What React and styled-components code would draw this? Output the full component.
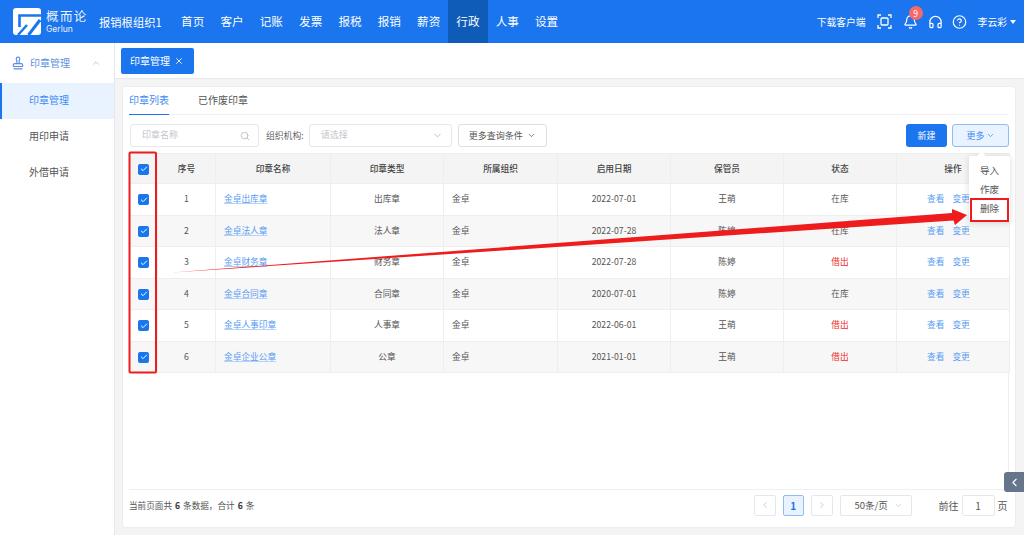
import React from 'react';
import styled, { createGlobalStyle } from 'styled-components';
import { ChevronUp, ChevronDown, ChevronLeft, ChevronRight, Search, X, Check, Bell, Headphones, CircleHelp, Stamp } from 'lucide-react';

const 파랑 = '#1a75ee';

const Global = createGlobalStyle`
  html, body { margin: 0; padding: 0; background: #fff; }
  body { font-family: "Noto Sans CJK SC", "Noto Sans", sans-serif; color: #555; overflow: hidden; }
  * { box-sizing: border-box; }
`;

const Page = styled.div`
  position: relative;
  width: 1024px;
  height: 535px;
  display: flex;
  flex-direction: column;
  overflow: hidden;
`;

const Header = styled.header`
  height: 43px;
  flex: none;
  background: ${파랑};
  display: flex;
  align-items: center;
  color: #fff;
  padding-left: 13px;
`;

const Logo = styled.div`
  display: flex;
  align-items: center;
  gap: 5px;
  width: 86px;
`;

const LogoText = styled.div`
  display: flex;
  flex-direction: column;
  line-height: 1;
  opacity: .92;
  b { font-size: 12.5px; font-weight: 400; letter-spacing: 1.4px; }
  span { font-family: "Inter", sans-serif; font-size: 8.5px; margin-top: 3px; }
`;

const OrgName = styled.div`
  font-size: 11.3px;
  width: 74px;
  white-space: nowrap;
`;

const NavItem = styled.div`
  width: 39.33px;
  height: 43px;
  display: flex;
  align-items: center;
  justify-content: center;
  font-size: 11.6px;
  padding-bottom: 1px;
  background: ${p => p.$active ? '#0f5cb8' : 'transparent'};
`;

const HeaderRight = styled.div`
  margin-left: auto;
  display: flex;
  align-items: center;
  font-size: 9.8px;
  padding-right: 8px;
`;

const Download = styled.span`
  margin-right: 11px;
`;

const IconSlot = styled.div`
  position: relative;
  width: 15px;
  height: 16px;
  margin-right: ${p => p.$gap || 10}px;
  display: flex;
  align-items: center;
  justify-content: center;
`;

const Badge = styled.span`
  position: absolute;
  top: -8px;
  left: 6px;
  width: 14px;
  height: 14px;
  border-radius: 50%;
  background: #f46a6a;
  font-size: 8.5px;
  line-height: 14px;
  text-align: center;
`;

const UserName = styled.span`
  margin-left: 1px;
`;

const Caret = styled.i`
  width: 0;
  height: 0;
  margin-left: 3px;
  border-left: 3.5px solid transparent;
  border-right: 3.5px solid transparent;
  border-top: 4px solid #fff;
`;

const Body = styled.div`
  flex: 1;
  display: flex;
  min-height: 0;
`;

const Sidebar = styled.aside`
  width: 115px;
  flex: none;
  background: #fff;
  border-right: 1px solid #e6e8eb;
  font-size: 10px;
`;

const SideGroup = styled.div`
  height: 40px;
  display: flex;
  align-items: center;
  padding: 0 0 1px 11px;
  color: #5b8fe0;
  svg:first-child { margin-right: 5px; }
  svg:last-child { margin-left: 21px; color: #b5b9c0; }
`;

const SideItem = styled.div`
  height: 36px;
  display: flex;
  align-items: center;
  padding: 0 0 3px 29px;
  color: ${p => p.$active ? '#3f8cf0' : '#555'};
  background: ${p => p.$active ? '#e8f3ff' : 'transparent'};
  box-shadow: ${p => p.$active ? `inset 2px 0 0 ${파랑}` : 'none'};
`;

const Main = styled.main`
  flex: 1;
  min-width: 0;
  display: flex;
  flex-direction: column;
  background: #f4f4f5;
`;

const TabBar = styled.div`
  height: 36px;
  flex: none;
  background: #fff;
  border-bottom: 1px solid #e6e8eb;
  padding: 5px 0 0 6px;
`;

const OpenTab = styled.div`
  width: 73px;
  height: 26px;
  background: ${파랑};
  border-radius: 2px;
  color: #fff;
  font-size: 10px;
  display: flex;
  align-items: center;
  gap: 4px;
  padding: 0 0 2px 9px;
  svg { margin-top: 2px; }
`;

const Card = styled.section`
  flex: 1;
  margin: 7px 8px 7px 7px;
  background: #fff;
  border: 1px solid #ebedf0;
  border-radius: 3px;
  padding: 0 6px;
  display: flex;
  flex-direction: column;
  min-height: 0;
`;

const Tabs = styled.div`
  height: 28px;
  flex: none;
  display: flex;
  gap: 29px;
  border-bottom: 1px solid #eef0f3;
  font-size: 10px;
`;

const Tab = styled.div`
  height: 28px;
  line-height: 25px;
  color: ${p => p.$active ? '#3f8cf0' : '#555'};
  border-bottom: ${p => p.$active ? `1px solid ${파랑}` : 'none'};
`;

const Filters = styled.div`
  height: 23px;
  flex: none;
  margin: 9px 0 6px;
  display: flex;
  align-items: center;
  font-size: 9px;
`;

const Field = styled.div`
  width: ${p => p.$w}px;
  height: 23px;
  margin-left: ${p => p.$ml || 0}px;
  border: 1px solid #e4e7ed;
  border-radius: 3px;
  display: flex;
  align-items: center;
  justify-content: space-between;
  padding: 0 8px 2px 11px;
  color: #c3c6cc;
  svg { color: #b5b9c0; margin-top: 2px; }
`;

const FieldLabel = styled.span`
  margin-left: 7px;
  margin-right: 5px;
  padding-bottom: 1px;
  color: #666;
  font-size: 8.8px;
`;

const PlainButton = styled.div`
  width: 89px;
  height: 23px;
  margin-left: 6px;
  border: 1px solid #dcdfe6;
  border-radius: 3px;
  display: flex;
  align-items: center;
  justify-content: center;
  gap: 4px;
  padding-bottom: 1px;
  color: #555;
`;

const ButtonRow = styled.div`
  margin-left: auto;
  display: flex;
  gap: 5px;
`;

const Primary = styled.div`
  width: 41px;
  height: 23px;
  border-radius: 3px;
  background: ${파랑};
  color: #fff;
  display: flex;
  align-items: center;
  justify-content: center;
  padding-bottom: 1px;
`;

const Outline = styled.div`
  width: 57px;
  height: 23px;
  border-radius: 3px;
  background: #e8f3ff;
  border: 1px solid #8fbdf6;
  color: #3f8cf0;
  display: flex;
  align-items: center;
  justify-content: center;
  gap: 1px;
  padding-bottom: 1px;
`;

const TableBox = styled.div`
  flex: 1;
  min-height: 0;
  border-bottom: 1px solid #eef0f3;
  border-right: 1px solid #eef0f3;
`;

const Table = styled.table`
  width: 880px;
  table-layout: fixed;
  border-collapse: collapse;
  font-size: 8.7px;
  color: #555;
`;

const Th = styled.th`
  height: 30px;
  background: #f4f4f5;
  border: 1px solid #eceef1;
  color: #444;
  font-weight: 500;
  text-align: center;
  padding: 0 0 1px;
`;

const Row = styled.tr`
  background: ${p => p.$even ? '#f7f7f8' : '#fff'};
`;

const Td = styled.td`
  height: 31.5px;
  border: 1px solid #eceef1;
  padding: ${p => p.$left ? '0 0 1px 8px' : '0 0 1px'};
  text-align: ${p => p.$left ? 'left' : 'center'};
  color: ${p => p.$red ? '#ee2a2a' : '#555'};
`;

const NameLink = styled.a`
  color: #5a9bf0;
  text-decoration: underline;
  text-decoration-color: #b4d2f7;
`;

const Action = styled.a`
  color: #5a9bf0;
  margin-right: 8px;
`;

const ActionCell = styled(Td)`
  padding-left: 30px;
  text-align: left;
`;

const CheckBox = styled.span`
  display: inline-flex;
  width: 11px;
  height: 11px;
  border-radius: 2px;
  background: ${파랑};
  color: #fff;
  align-items: center;
  justify-content: center;
  vertical-align: middle;
`;

const Footer = styled.div`
  height: 37px;
  flex: none;
  display: flex;
  align-items: center;
  padding-bottom: 7px;
  font-size: 8.6px;
  color: #555;
  b { color: #333; margin: 0 3px; }
`;

const Pager = styled.div`
  margin-left: auto;
  display: flex;
  align-items: center;
  gap: 7px;
  font-size: 10px;
`;

const PageBtn = styled.div`
  width: 21.5px;
  height: 21px;
  border: 1px solid ${p => p.$active ? '#8fbdf6' : '#e4e7ed'};
  background: ${p => p.$active ? '#e8f3ff' : '#fff'};
  color: ${p => p.$active ? 파랑 : '#c0c4cc'};
  border-radius: 2px;
  font-weight: 700;
  display: flex;
  align-items: center;
  justify-content: center;
`;

const SizeSelect = styled.div`
  width: 72px;
  height: 21px;
  border: 1px solid #e4e7ed;
  border-radius: 2px;
  display: flex;
  align-items: center;
  justify-content: space-between;
  padding: 0 8px 1px 14px;
  font-size: 9.5px;
  svg { color: #c0c4cc; margin-top: 1px; }
`;

const Jump = styled.div`
  margin-left: 20px;
  margin-right: 1.5px;
  display: flex;
  align-items: center;
  gap: 3px;
`;

const JumpInput = styled.div`
  width: 33px;
  height: 21px;
  border: 1px solid #e4e7ed;
  border-radius: 2px;
  display: flex;
  align-items: center;
  justify-content: center;
`;

// 화면 위에 떠 있는 것들
const Popup = styled.div`
  position: absolute;
  left: 969px;
  top: 156px;
  width: 41px;
  height: 66px;
  background: #fff;
  border-radius: 2px;
  box-shadow: 0 1px 6px rgba(0,0,0,.15);
  font-size: 9.6px;
  color: #555;
  padding-top: 5px;
  text-align: center;
  &::before {
    content: '';
    position: absolute;
    left: 9px;
    top: -3px;
    width: 7px;
    height: 7px;
    background: #fff;
    transform: rotate(45deg);
  }
`;

const PopupItem = styled.div`
  height: 19px;
  line-height: 19px;
`;

const Collapse = styled.div`
  position: absolute;
  right: 0;
  top: 472px;
  width: 20px;
  height: 20px;
  background: #67758c;
  border-radius: 3px 0 0 3px;
  color: #fff;
  display: flex;
  align-items: center;
  justify-content: center;
`;

const Marks = styled.svg`
  position: absolute;
  left: 0;
  top: 0;
  pointer-events: none;
`;

const 메뉴 = ['首页', '客户', '记账', '发票', '报税', '报销', '薪资', '行政', '人事', '设置'];

const 컬럼 = [
  ['', 28], ['序号', 58], ['印章名称', 115], ['印章类型', 113], ['所属组织', 114],
  ['启用日期', 113], ['保管员', 113], ['状态', 113], ['操作', 113],
];

const 목록 = [
  { no: 1, name: '金卓出库章', type: '出库章', date: '2022-07-01', keeper: '王萌', status: '在库' },
  { no: 2, name: '金卓法人章', type: '法人章', date: '2022-07-28', keeper: '陈婷', status: '在库' },
  { no: 3, name: '金卓财务章', type: '财务章', date: '2022-07-28', keeper: '陈婷', status: '借出' },
  { no: 4, name: '金卓合同章', type: '合同章', date: '2020-07-01', keeper: '陈婷', status: '在库' },
  { no: 5, name: '金卓人事印章', type: '人事章', date: '2022-06-01', keeper: '王萌', status: '借出' },
  { no: 6, name: '金卓企业公章', type: '公章', date: '2021-01-01', keeper: '王萌', status: '借出' },
];

function LogoMark() {
  return (
    <svg width="28" height="27" viewBox="0 0 28 27" fill="none">
      <rect width="28" height="27" rx="3" fill="#fff" />
      <path d="M28 7.5H6.5V19" stroke={파랑} strokeWidth="2.6" />
      <path d="M27 12L15.5 27" stroke={파랑} strokeWidth="3" />
      <path d="M5 27L14 17" stroke={파랑} strokeWidth="2.4" />
    </svg>
  );
}

function ScanIcon() {
  return (
    <svg width="15" height="15" viewBox="0 0 15 15" fill="none" stroke="#fff" strokeWidth="1.3">
      <path d="M1 4V1H4M11 1H14V4M14 11V14H11M4 14H1V11" />
      <rect x="4" y="4" width="7" height="7" rx="1" />
    </svg>
  );
}

export default function App() {
  return (
    <Page>
      <Global />
      <Header>
        <Logo>
          <LogoMark />
          <LogoText><b>概而论</b><span>Gerlun</span></LogoText>
        </Logo>
        <OrgName>报销根组织1</OrgName>
        {메뉴.map(m => <NavItem key={m} $active={m === '行政'}>{m}</NavItem>)}
        <HeaderRight>
          <Download>下载客户端</Download>
          <IconSlot $gap={11}><ScanIcon /></IconSlot>
          <IconSlot $gap={10}><Bell size={16} strokeWidth={2} /><Badge>9</Badge></IconSlot>
          <IconSlot $gap={9}><Headphones size={16} strokeWidth={2} /></IconSlot>
          <IconSlot $gap={10}><CircleHelp size={18} strokeWidth={1.9} /></IconSlot>
          <UserName>李云彩</UserName>
          <Caret />
        </HeaderRight>
      </Header>
      <Body>
        <Sidebar>
          <SideGroup>
            <Stamp size={14} />
            <span>印章管理</span>
            <ChevronUp size={10} />
          </SideGroup>
          <SideItem $active>印章管理</SideItem>
          <SideItem>用印申请</SideItem>
          <SideItem>外借申请</SideItem>
        </Sidebar>
        <Main>
          <TabBar>
            <OpenTab>印章管理 <X size={10} /></OpenTab>
          </TabBar>
          <Card>
            <Tabs>
              <Tab $active>印章列表</Tab>
              <Tab>已作废印章</Tab>
            </Tabs>
            <Filters>
              <Field $w={129} $ml={1}>印章名称<Search size={10} /></Field>
              <FieldLabel>组织机构:</FieldLabel>
              <Field $w={143}>请选择<ChevronDown size={11} /></Field>
              <PlainButton>更多查询条件 <ChevronDown size={9} /></PlainButton>
              <ButtonRow>
                <Primary>新建</Primary>
                <Outline>更多<ChevronDown size={9} /></Outline>
              </ButtonRow>
            </Filters>
            <TableBox>
              <Table>
                <colgroup>
                  {컬럼.map(([t, w], i) => <col key={i} width={w} />)}
                </colgroup>
                <thead>
                  <tr>
                    {컬럼.map(([t], i) => (
                      <Th key={i}>
                        {i === 0 ? <CheckBox><Check size={8} strokeWidth={3} /></CheckBox> : t}
                      </Th>
                    ))}
                  </tr>
                </thead>
                <tbody>
                  {목록.map(r => (
                    <Row key={r.no} $even={r.no % 2 === 0}>
                      <Td><CheckBox><Check size={8} strokeWidth={3} /></CheckBox></Td>
                      <Td>{r.no}</Td>
                      <Td $left><NameLink>{r.name}</NameLink></Td>
                      <Td>{r.type}</Td>
                      <Td $left>金卓</Td>
                      <Td>{r.date}</Td>
                      <Td>{r.keeper}</Td>
                      <Td $red={r.status === '借出'}>{r.status}</Td>
                      <ActionCell><Action>查看</Action><Action>变更</Action></ActionCell>
                    </Row>
                  ))}
                </tbody>
              </Table>
            </TableBox>
            <Footer>
              当前页面共<b>6</b>条数据，合计<b>6</b>条
              <Pager>
                <PageBtn><ChevronLeft size={10} /></PageBtn>
                <PageBtn $active>1</PageBtn>
                <PageBtn><ChevronRight size={10} /></PageBtn>
                <SizeSelect>50条/页<ChevronDown size={9} /></SizeSelect>
                <Jump>前往 <JumpInput>1</JumpInput> 页</Jump>
              </Pager>
            </Footer>
          </Card>
        </Main>
      </Body>
      <Popup>
        <PopupItem>导入</PopupItem>
        <PopupItem>作废</PopupItem>
        <PopupItem>删除</PopupItem>
      </Popup>
      <Collapse><ChevronLeft size={13} /></Collapse>
      <Marks width="1024" height="535" viewBox="0 0 1024 535">
        <rect x="129.5" y="152.5" width="26.5" height="220" rx="1" fill="none" stroke="#ee1c1c" strokeWidth="2" />
        <rect x="971" y="199" width="37" height="22" fill="none" stroke="#ee1c1c" strokeWidth="2" />
        <path d="M172 272.5L952 213L952 209L967 215L955 225L953.5 220.5Z" fill="#ee1c1c" />
      </Marks>
    </Page>
  );
}
